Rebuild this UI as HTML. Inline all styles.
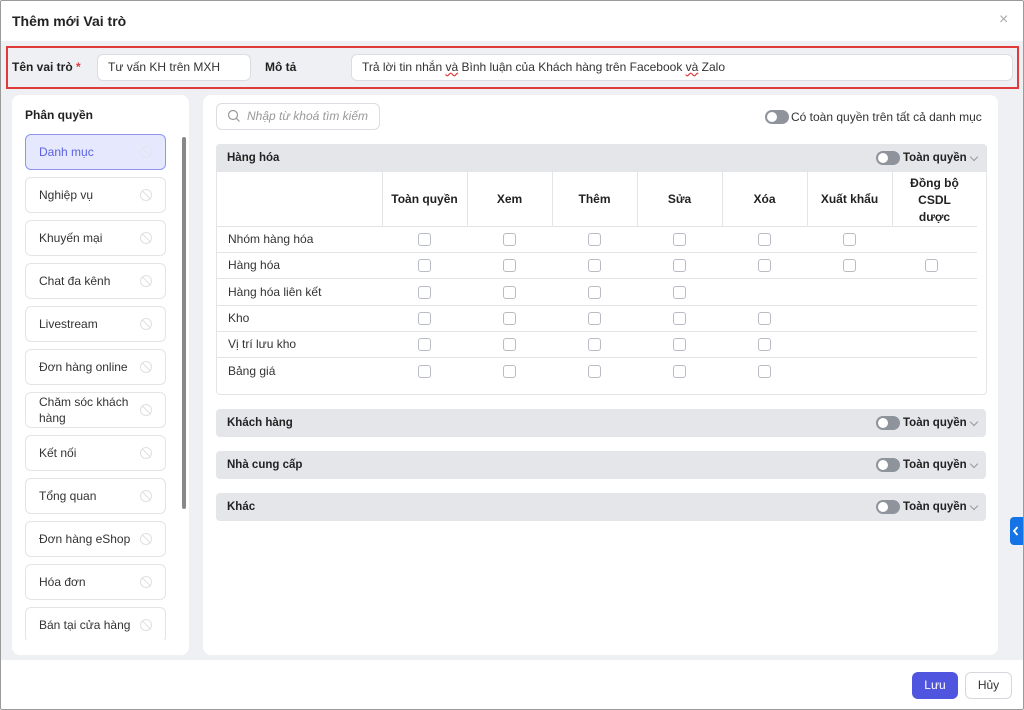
<!DOCTYPE html>
<html><head><meta charset="utf-8"><style>
*{box-sizing:border-box;margin:0;padding:0}
body{width:1024px;height:710px;position:relative;overflow:hidden;background:#fff;font-family:"Liberation Sans",sans-serif;color:#222;font-size:12px}
.a{position:absolute}
.frame{left:0;top:0;width:1024px;height:710px;border:1px solid #9a9a9a;border-radius:2px}
.gray{left:1px;top:41px;width:1022px;height:619px;background:#eff0f3}
.inp{background:#fff;border:1px solid #dcdde2;border-radius:6px;font-size:12px;color:#333;padding-left:10px;line-height:24px}
.lbl{font-weight:bold;font-size:12px;color:#222}
.panel{background:#fff;border-radius:8px}
.it{left:25px;width:141px;height:36px;border:1px solid #e3e4e8;border-radius:6px;background:#fff;font-size:12px;color:#333;padding-left:13px;line-height:34px}
.it.sel{background:#e6e9fd;border-color:#8d95f0;color:#5a62e0}
.ic{position:absolute;right:13px;top:11px;width:12px;height:12px;border:1.3px solid #dfe0e3;border-radius:50%}
.ic:after{content:"";position:absolute;left:4.5px;top:-1px;width:1.3px;height:12px;background:#dfe0e3;transform:rotate(-45deg)}
.sh{left:216px;width:770px;height:28px;background:#e5e6ea;border-radius:4px;font-weight:bold;font-size:11.5px;line-height:28px;padding-left:11px}
.tg{position:absolute;width:24px;height:14px;border-radius:7px;background:#8e939c}
.tg:after{content:"";position:absolute;left:2px;top:2px;width:10px;height:10px;border-radius:50%;background:#fff}
.tq{position:absolute;font-weight:bold;font-size:11.5px}
.chev{position:absolute;width:6px;height:6px;border-right:1px solid #999;border-bottom:1px solid #999;transform:rotate(45deg)}
.cb{position:absolute;width:13px;height:13px;border:1px solid #b9bcc4;border-radius:3px;background:#fff}
.hl{position:absolute;height:1px;background:#e3e4e8}
.vl{position:absolute;width:1px;background:#e3e4e8}
.th{position:absolute;font-weight:bold;font-size:12px;text-align:center;width:85px}
.rl{position:absolute;left:228px;font-size:12px;color:#333}
</style></head><body>
<div class="a gray"></div>
<div class="a" style="left:12px;top:13px;font-weight:bold;font-size:14px">Thêm mới Vai trò</div>
<div class="a" style="left:999px;top:11px;font-size:16px;color:#aaa">×</div>
<div class="a" style="left:6px;top:46px;width:1013px;height:43px;border:2px solid #e03b3b"></div>
<div class="a lbl" style="left:12px;top:60px">Tên vai trò <span style="color:#e03b3b">*</span></div>
<div class="a inp" style="left:97px;top:54px;width:154px;height:27px">Tư vấn KH trên MXH</div>
<div class="a lbl" style="left:265px;top:60px">Mô tả</div>
<div class="a inp" style="left:351px;top:54px;width:662px;height:27px">Trả lời tin nhắn <span style="text-decoration:underline wavy #e03b3b">và</span> Bình luận của Khách hàng trên Facebook <span style="text-decoration:underline wavy #e03b3b">và</span> Zalo</div>

<div class="a panel" style="left:12px;top:95px;width:177px;height:560px"></div>
<div class="a lbl" style="left:25px;top:108px">Phân quyền</div>
<div class="a" style="left:182px;top:137px;width:4px;height:372px;background:#888;border-radius:2px"></div>
<div class="a" style="left:12px;top:640px;width:177px;height:15px;background:#fff;z-index:2;border-radius:0 0 8px 8px"></div>
<div class="a it sel" style="top:134px">Danh mục<span class="ic" style="opacity:.5"></span></div>
<div class="a it" style="top:177px">Nghiệp vụ<span class="ic"></span></div>
<div class="a it" style="top:220px">Khuyến mại<span class="ic"></span></div>
<div class="a it" style="top:263px">Chat đa kênh<span class="ic"></span></div>
<div class="a it" style="top:306px">Livestream<span class="ic"></span></div>
<div class="a it" style="top:349px">Đơn hàng online<span class="ic"></span></div>
<div class="a it" style="top:392px;line-height:16px;padding-top:1px">Chăm sóc khách<br>hàng<span class="ic"></span></div>
<div class="a it" style="top:435px">Kết nối<span class="ic"></span></div>
<div class="a it" style="top:478px">Tổng quan<span class="ic"></span></div>
<div class="a it" style="top:521px">Đơn hàng eShop<span class="ic"></span></div>
<div class="a it" style="top:564px">Hóa đơn<span class="ic"></span></div>
<div class="a it" style="top:607px">Bán tại cửa hàng<span class="ic"></span></div>

<div class="a panel" style="left:203px;top:95px;width:795px;height:560px"></div>
<div class="a inp" style="left:216px;top:103px;width:164px;height:27px;padding-left:30px;color:#999;font-style:italic">Nhập từ khoá tìm kiếm</div>
<svg class="a" style="left:227px;top:109px" width="14" height="14"><circle cx="6" cy="6" r="4.5" fill="none" stroke="#999" stroke-width="1.2"/><line x1="9.3" y1="9.3" x2="12.5" y2="12.5" stroke="#999" stroke-width="1.2"/></svg>
<div class="tg" style="left:765px;top:110px"></div>
<div class="a" style="left:791px;top:110px;font-size:12px;color:#333">Có toàn quyền trên tất cả danh mục</div>

<div class="a" style="left:216px;top:144px;width:771px;height:251px;border:1px solid #e3e4e8;border-radius:4px"></div>
<div class="a sh" style="top:144px;border-radius:4px 4px 0 0">Hàng hóa</div>
<div class="tg" style="left:876px;top:151px"></div><div class="tq" style="left:903px;top:152px">Toàn quyền</div><div class="chev" style="left:971px;top:154px"></div>
<div class="vl" style="left:382px;top:172px;height:54px"></div>
<div class="vl" style="left:467px;top:172px;height:54px"></div>
<div class="vl" style="left:552px;top:172px;height:54px"></div>
<div class="vl" style="left:637px;top:172px;height:54px"></div>
<div class="vl" style="left:722px;top:172px;height:54px"></div>
<div class="vl" style="left:807px;top:172px;height:54px"></div>
<div class="vl" style="left:892px;top:172px;height:54px"></div>
<div class="th" style="left:382px;top:192px">Toàn quyền</div>
<div class="th" style="left:467px;top:192px">Xem</div>
<div class="th" style="left:552px;top:192px">Thêm</div>
<div class="th" style="left:637px;top:192px">Sửa</div>
<div class="th" style="left:722px;top:192px">Xóa</div>
<div class="th" style="left:807px;top:192px">Xuất khẩu</div>
<div class="th" style="left:892px;top:175px;line-height:17px">Đồng bộ<br>CSDL<br>dược</div>
<div class="hl" style="left:217px;top:226px;width:760px"></div>
<div class="hl" style="left:217px;top:252px;width:760px"></div>
<div class="hl" style="left:217px;top:278px;width:760px"></div>
<div class="hl" style="left:217px;top:305px;width:760px"></div>
<div class="hl" style="left:217px;top:331px;width:760px"></div>
<div class="hl" style="left:217px;top:357px;width:760px"></div>
<div class="rl" style="top:232px">Nhóm hàng hóa</div>
<div class="rl" style="top:258px">Hàng hóa</div>
<div class="rl" style="top:285px">Hàng hóa liên kết</div>
<div class="rl" style="top:311px">Kho</div>
<div class="rl" style="top:337px">Vị trí lưu kho</div>
<div class="rl" style="top:364px">Bảng giá</div>
<div class="cb" style="left:418px;top:233px"></div><div class="cb" style="left:503px;top:233px"></div><div class="cb" style="left:588px;top:233px"></div><div class="cb" style="left:673px;top:233px"></div><div class="cb" style="left:758px;top:233px"></div><div class="cb" style="left:843px;top:233px"></div>
<div class="cb" style="left:418px;top:259px"></div><div class="cb" style="left:503px;top:259px"></div><div class="cb" style="left:588px;top:259px"></div><div class="cb" style="left:673px;top:259px"></div><div class="cb" style="left:758px;top:259px"></div><div class="cb" style="left:843px;top:259px"></div><div class="cb" style="left:925px;top:259px"></div>
<div class="cb" style="left:418px;top:286px"></div><div class="cb" style="left:503px;top:286px"></div><div class="cb" style="left:588px;top:286px"></div><div class="cb" style="left:673px;top:286px"></div>
<div class="cb" style="left:418px;top:312px"></div><div class="cb" style="left:503px;top:312px"></div><div class="cb" style="left:588px;top:312px"></div><div class="cb" style="left:673px;top:312px"></div><div class="cb" style="left:758px;top:312px"></div>
<div class="cb" style="left:418px;top:338px"></div><div class="cb" style="left:503px;top:338px"></div><div class="cb" style="left:588px;top:338px"></div><div class="cb" style="left:673px;top:338px"></div><div class="cb" style="left:758px;top:338px"></div>
<div class="cb" style="left:418px;top:365px"></div><div class="cb" style="left:503px;top:365px"></div><div class="cb" style="left:588px;top:365px"></div><div class="cb" style="left:673px;top:365px"></div><div class="cb" style="left:758px;top:365px"></div>

<div class="a sh" style="top:409px">Khách hàng</div>
<div class="tg" style="left:876px;top:416px"></div><div class="tq" style="left:903px;top:417px">Toàn quyền</div><div class="chev" style="left:971px;top:419px"></div>
<div class="a sh" style="top:451px">Nhà cung cấp</div>
<div class="tg" style="left:876px;top:458px"></div><div class="tq" style="left:903px;top:459px">Toàn quyền</div><div class="chev" style="left:971px;top:461px"></div>
<div class="a sh" style="top:493px">Khác</div>
<div class="tg" style="left:876px;top:500px"></div><div class="tq" style="left:903px;top:501px">Toàn quyền</div><div class="chev" style="left:971px;top:503px"></div>

<div class="a" style="left:1010px;top:517px;width:14px;height:28px;background:#1673e6;border-radius:4px 0 0 4px"></div>
<svg class="a" style="left:1012px;top:525px" width="8" height="12"><path d="M5.5 2 L2 6 L5.5 10" fill="none" stroke="#fff" stroke-width="1.8"/></svg>

<div class="a" style="left:912px;top:672px;width:46px;height:27px;background:#4f55de;border-radius:6px;color:#fff;font-size:12px;text-align:center;line-height:27px">Lưu</div>
<div class="a" style="left:965px;top:672px;width:47px;height:27px;border:1px solid #d6d7dc;border-radius:6px;color:#333;font-size:12px;text-align:center;line-height:25px">Hủy</div>
<div class="a frame"></div>
</body></html>
